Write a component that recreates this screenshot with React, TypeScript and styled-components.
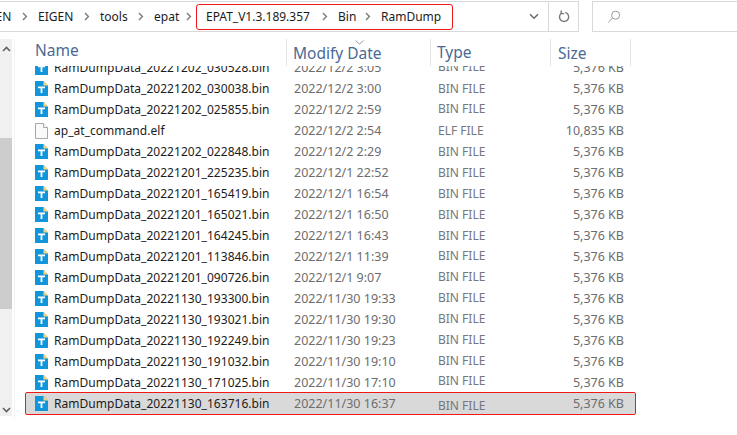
import React from "react";
import styled, { createGlobalStyle } from "styled-components";

const Global = createGlobalStyle`
  html, body { margin: 0; padding: 0; background: #fff; }
  body { font-family: "Noto Sans", "Liberation Sans", sans-serif; }
`;

const Page = styled.div`
  width: 737px;
  height: 435px;
  overflow: hidden;
  background: #fff;
  display: flex;
  flex-direction: column;
`;

const TopBar = styled.div`
  display: flex;
  height: 31px;
  margin-top: 1px;
  flex: none;
`;

const Address = styled.div`
  width: 579px;
  box-sizing: border-box;
  border: 1px solid #d9d9d9;
  border-left: none;
  display: flex;
  align-items: center;
  overflow: hidden;
`;

const Crumbs = styled.div`
  display: flex;
  align-items: center;
  width: 534px;
  flex: none;
  margin-left: -24px;
`;

const Crumb = styled.span<{ $w: number }>`
  width: ${(p) => p.$w}px;
  flex: none;
  font-size: 12px;
  color: #1c1c1c;
  white-space: nowrap;
`;

const ChevronCell = styled.span<{ $w: number }>`
  width: ${(p) => p.$w}px;
  flex: none;
  display: flex;
  justify-content: center;
`;

const Highlight = styled.div`
  width: 257px;
  height: 26px;
  box-sizing: border-box;
  margin-left: -2px;
  padding-left: 9px;
  border: 1px solid #f01818;
  border-radius: 3px;
  display: flex;
  align-items: center;
  flex: none;
`;

const DropCell = styled.div`
  width: 14px;
  display: flex;
  justify-content: center;
  flex: none;
  margin-left: 17px;
  margin-right: 7px;
`;

const RefreshCell = styled.div`
  flex: 1;
  height: 100%;
  border-left: 1px solid #d9d9d9;
  display: flex;
  align-items: center;
  justify-content: center;
`;

const SearchBox = styled.div`
  margin-left: 13px;
  flex: 1;
  box-sizing: border-box;
  border: 1px solid #d9d9d9;
  border-right: none;
  display: flex;
  align-items: center;
  padding-left: 14px;
`;

const Body = styled.div`
  display: flex;
  margin-top: 7px;
  height: 380px;
  flex: none;
`;

const ScrollTrack = styled.div`
  width: 12px;
  height: 377px;
  flex: none;
  background: #f0f0f0;
  display: grid;
  grid-template-rows: 19px 80px 171px 1fr 19px;
  justify-items: center;
  align-items: center;
`;

const Thumb = styled.div`
  grid-row: 3;
  justify-self: stretch;
  align-self: stretch;
  background: #cdcdcd;
`;

const ArrowDown = styled.div`
  grid-row: 5;
`;

const Pane = styled.div`
  margin-left: 2px;
  border-left: 1px solid #f3f3f3;
  flex: 1;
  display: flex;
  flex-direction: column;
  min-width: 0;
`;

const Header = styled.div`
  height: 27px;
  flex: none;
  display: grid;
  grid-template-columns: 272px 144px 120px 80px;
`;

const HeadCell = styled.div<{ $pad: number; $top: number }>`
  position: relative;
  box-sizing: border-box;
  padding-left: ${(p) => p.$pad}px;
  padding-top: ${(p) => p.$top}px;
  font-size: 15.5px;
  line-height: 20px;
  color: #4a6a94;
  white-space: nowrap;
  border-right: 1px solid #e5e5e5;
`;

const SortMark = styled.span`
  position: absolute;
  left: 68px;
  top: 0;
  line-height: 0;
`;

const List = styled.div`
  flex: 1;
  overflow: hidden;
`;

const ListInner = styled.div`
  margin-top: -9px;
  display: flex;
  flex-direction: column;
`;

const Row = styled.div<{ $selected?: boolean }>`
  display: grid;
  grid-template-columns: 28px 240px 144px 80px 1fr;
  align-items: center;
  box-sizing: border-box;
  height: 21px;
  width: 609px;
  margin-left: 11px;
  background: ${(p) => (p.$selected ? "#d9d9d9" : "transparent")};
  outline: ${(p) => (p.$selected ? "1px solid #f01818" : "none")};
  border-radius: 1px;
`;

const IconCell = styled.div`
  padding-left: 9px;
  display: flex;
  align-items: center;
`;

const FileName = styled.div`
  font-size: 12px;
  letter-spacing: 0.03px;
  color: #1c1c1c;
  white-space: nowrap;
`;

const Muted = styled.div`
  font-size: 12.5px;
  color: #6d6d6d;
  white-space: nowrap;
`;

const TypeText = styled(Muted)<{ $shift: number }>`
  color: #737780;
  font-size: 12px;
  margin-top: ${(p) => p.$shift}px;
`;

const SizeText = styled(Muted)`
  text-align: right;
  padding-right: 11px;
`;

const Chevron = () => (
  <svg width="6" height="9" viewBox="0 0 6 9" fill="none" stroke="#7d7d7d" strokeWidth="1.4">
    <path d="M1 1l3.4 3.5L1 8" />
  </svg>
);

const BinIcon = () => (
  <svg width="13" height="15" viewBox="0 0 13 15">
    <path d="M0 0h8.5l4.5 4.5V15H0z" fill="#1296db" />
    <path d="M8.5 0L13 4.5H8.5z" fill="#f6d878" />
    <path d="M3 5.5h7v1.8H7.4V12H5.6V7.3H3z" fill="#fff" />
  </svg>
);

const ElfIcon = () => (
  <svg width="13" height="16" viewBox="0 0 13 16" fill="#fafafa" stroke="#a8a8a8">
    <path d="M.5.5h8l4 4v11H.5z" />
    <path d="M8.5.5v4h4" fill="#fff" />
  </svg>
);

type File = { name: string; date: string; type: string; size: string; shift: number; elf?: boolean };

const mk = (name: string, date: string, shift = -2, type = "BIN FILE", size = "5,376 KB", elf = false): File => ({
  name,
  date,
  type,
  size,
  shift,
  elf,
});

const files: File[] = [
  mk("RamDumpData_20221202_030528.bin", "2022/12/2 3:05"),
  mk("RamDumpData_20221202_030038.bin", "2022/12/2 3:00", 0),
  mk("RamDumpData_20221202_025855.bin", "2022/12/2 2:59", -2),
  mk("ap_at_command.elf", "2022/12/2 2:54", 0, "ELF FILE", "10,835 KB", true),
  mk("RamDumpData_20221202_022848.bin", "2022/12/2 2:29", 0),
  mk("RamDumpData_20221201_225235.bin", "2022/12/1 22:52", 0),
  mk("RamDumpData_20221201_165419.bin", "2022/12/1 16:54", 0),
  mk("RamDumpData_20221201_165021.bin", "2022/12/1 16:50", 0),
  mk("RamDumpData_20221201_164245.bin", "2022/12/1 16:43", 0),
  mk("RamDumpData_20221201_113846.bin", "2022/12/1 11:39", -2),
  mk("RamDumpData_20221201_090726.bin", "2022/12/1 9:07", -2),
  mk("RamDumpData_20221130_193300.bin", "2022/11/30 19:33", -2),
  mk("RamDumpData_20221130_193021.bin", "2022/11/30 19:30", -2),
  mk("RamDumpData_20221130_192249.bin", "2022/11/30 19:23", -2),
  mk("RamDumpData_20221130_191032.bin", "2022/11/30 19:10", -2),
  mk("RamDumpData_20221130_171025.bin", "2022/11/30 17:10", -4),
  mk("RamDumpData_20221130_163716.bin", "2022/11/30 16:37", 4),
];

export default function App() {
  return (
    <Page>
      <Global />
      <TopBar>
        <Address>
          <Crumbs>
            <Crumb $w={36}>EIGEN</Crumb>
            <ChevronCell $w={26}><Chevron /></ChevronCell>
            <Crumb $w={36}>EIGEN</Crumb>
            <ChevronCell $w={26}><Chevron /></ChevronCell>
            <Crumb $w={28}>tools</Crumb>
            <ChevronCell $w={26}><Chevron /></ChevronCell>
            <Crumb $w={25}>epat</Crumb>
            <ChevronCell $w={19}><Chevron /></ChevronCell>
            <Highlight>
              <Crumb $w={106}>EPAT_V1.3.189.357</Crumb>
              <ChevronCell $w={26}><Chevron /></ChevronCell>
              <Crumb $w={17}>Bin</Crumb>
              <ChevronCell $w={26}><Chevron /></ChevronCell>
              <Crumb $w={61}>RamDump</Crumb>
            </Highlight>
          </Crumbs>
          <DropCell>
            <svg width="10" height="7" viewBox="0 0 10 7" fill="none" stroke="#6e6e6e" strokeWidth="1.6">
              <path d="M1 1.2l4 4 4-4" />
            </svg>
          </DropCell>
          <RefreshCell>
            <svg width="12" height="13" viewBox="0 0 12 13" fill="none" stroke="#7a7a7a" strokeWidth="1.4">
              <path d="M3.6 3a4.6 4.6 0 1 0 3.6-.6" />
              <path d="M3.2.6V3.6h3" />
            </svg>
          </RefreshCell>
        </Address>
        <SearchBox>
          <svg width="14" height="14" viewBox="0 0 14 14" fill="none" stroke="#9a9a9a" strokeWidth="1">
            <circle cx="8.6" cy="5.2" r="4" />
            <path d="M5.6 8L1.2 12.6" stroke="#b39a8e" />
          </svg>
        </SearchBox>
      </TopBar>
      <Body>
        <ScrollTrack>
          <svg width="9" height="6" viewBox="0 0 9 6" fill="none" stroke="#606060" strokeWidth="1.6">
            <path d="M1 5l3.5-3.5L8 5" />
          </svg>
          <Thumb />
          <ArrowDown>
            <svg width="9" height="6" viewBox="0 0 9 6" fill="none" stroke="#606060" strokeWidth="1.6">
              <path d="M1 1l3.5 3.5L8 1" />
            </svg>
          </ArrowDown>
        </ScrollTrack>
        <Pane>
          <Header>
            <HeadCell $pad={20} $top={1}>Name</HeadCell>
            <HeadCell $pad={6} $top={4}>
              <SortMark>
                <svg width="9" height="5" viewBox="0 0 9 5" fill="none" stroke="#9a9a9a">
                  <path d="M.5.5l4 3.5 4-3.5" />
                </svg>
              </SortMark>
              Modify Date
            </HeadCell>
            <HeadCell $pad={6} $top={3}>Type</HeadCell>
            <HeadCell $pad={7} $top={4}>Size</HeadCell>
          </Header>
          <List>
            <ListInner>
              {files.map((f, i) => (
                <Row key={f.name} $selected={i === files.length - 1}>
                  <IconCell>{f.elf ? <ElfIcon /> : <BinIcon />}</IconCell>
                  <FileName>{f.name}</FileName>
                  <Muted>{f.date}</Muted>
                  <TypeText $shift={f.shift}>{f.type}</TypeText>
                  <SizeText>{f.size}</SizeText>
                </Row>
              ))}
            </ListInner>
          </List>
        </Pane>
      </Body>
    </Page>
  );
}
